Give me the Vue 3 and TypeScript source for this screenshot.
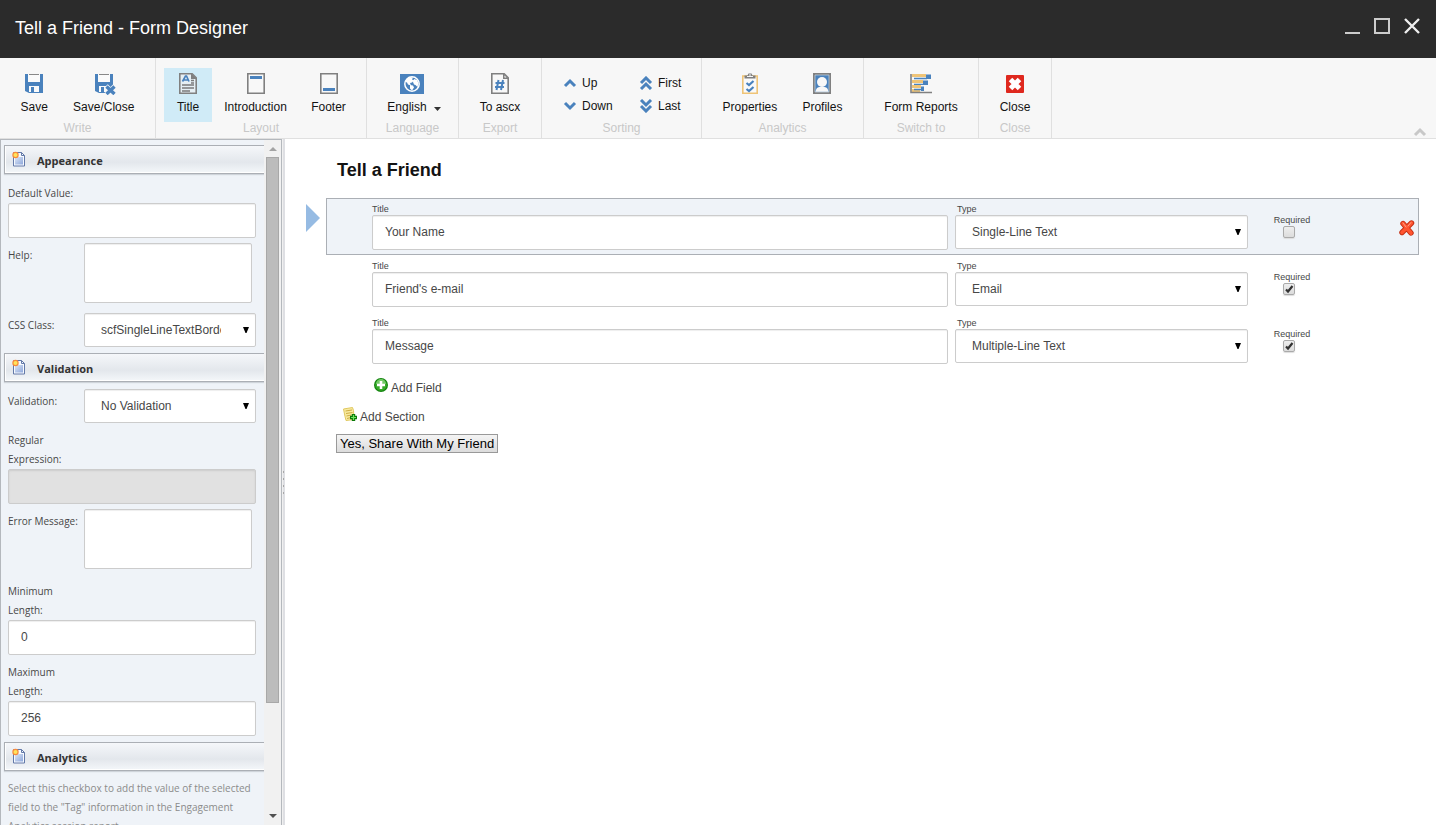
<script setup lang="ts">
import { reactive, ref } from 'vue'

interface Tool { id: string; label: string; active?: boolean; menu?: boolean }
interface Group { name: string; width: number; tools: Tool[] }
interface Field { title: string; type: string; required: boolean }

const groups: Group[] = [
  { name: 'Write', width: 156, tools: [{ id: 'save', label: 'Save' }, { id: 'saveclose', label: 'Save/Close' }] },
  { name: 'Layout', width: 211, tools: [{ id: 'title', label: 'Title', active: true }, { id: 'intro', label: 'Introduction' }, { id: 'footer', label: 'Footer' }] },
  { name: 'Language', width: 92, tools: [{ id: 'globe', label: 'English', menu: true }] },
  { name: 'Export', width: 83, tools: [{ id: 'ascx', label: 'To ascx' }] },
  { name: 'Sorting', width: 160, tools: [] },
  { name: 'Analytics', width: 162, tools: [{ id: 'properties', label: 'Properties' }, { id: 'profiles', label: 'Profiles' }] },
  { name: 'Switch to', width: 115, tools: [{ id: 'reports', label: 'Form Reports' }] },
  { name: 'Close', width: 73, tools: [{ id: 'close', label: 'Close' }] },
]
const sorting = [
  { label: 'Up', d: 'M2 10 7 5l5 5' },
  { label: 'First', d: 'M2 7l5-5 5 5M2 13l5-5 5 5' },
  { label: 'Down', d: 'M2 4l5 5 5-5' },
  { label: 'Last', d: 'M2 1l5 5 5-5M2 7l5 5 5-5' },
]
const types = ['Single-Line Text', 'Email', 'Multiple-Line Text']
const fields = reactive<Field[]>([
  { title: 'Your Name', type: 'Single-Line Text', required: false },
  { title: "Friend's e-mail", type: 'Email', required: true },
  { title: 'Message', type: 'Multiple-Line Text', required: true },
])
const selected = ref(0)
const defaultValue = ref('')
const help = ref('')
const errorMessage = ref('')
const minLength = ref('0')
const maxLength = ref('256')
</script>

<template>
  <div class="window">
    <header class="titlebar">
      <h1>Tell a Friend - Form Designer</h1>
      <div class="window-buttons">
        <button type="button" aria-label="Minimize"><svg width="16" height="18" viewBox="0 0 16 18"><path d="M1 16h15" stroke="#ccc" stroke-width="2" /></svg></button>
        <button type="button" aria-label="Maximize"><svg width="16" height="18" viewBox="0 0 16 18"><path d="M1 2h14v14H1z" fill="none" stroke="#ccc" stroke-width="2" /></svg></button>
        <button type="button" aria-label="Close window"><svg width="16" height="18" viewBox="0 0 16 18"><path d="M1 2l14 14M15 2L1 16" fill="none" stroke="#eee" stroke-width="2.4" /></svg></button>
      </div>
    </header>

    <nav class="ribbon">
      <section v-for="g in groups" :key="g.name" class="group" :style="{ minWidth: g.width + 'px' }">
        <div v-if="g.name === 'Sorting'" class="sorting">
          <button v-for="s in sorting" :key="s.label" type="button">
            <svg width="14" height="14" viewBox="0 0 14 14"><path :d="s.d" fill="none" stroke="#4a82bd" stroke-width="3" /></svg>{{ s.label }}
          </button>
        </div>
        <div v-else class="tools">
          <button v-for="t in g.tools" :key="t.id" type="button" class="tool" :class="{ active: t.active, menu: t.menu }">
            <svg width="24" height="24" viewBox="0 0 24 24">
              <g v-if="t.id === 'save' || t.id === 'saveclose'">
                <path d="M3 3h3v8h12V3h3v19H7l-4-2z" fill="#4a82bd" />
                <path d="M6 3h12v8H6z" fill="#fafafa" /><path d="M7 3.500h10" stroke="#888" />
                <path d="M7 15h10v6H7z" fill="#fafafa" /><path d="M9 16h3v5H9z" fill="#4a82bd" />
                <g v-if="t.id === 'saveclose'"><path d="M14 15l9 9M23 15l-9 9" stroke="#f7f7f7" stroke-width="5" /><path d="M14.500 15.500l8 7.500M22.500 15.500l-8 7.500" stroke="#4a82bd" stroke-width="3.400" /></g>
              </g>
              <g v-else-if="t.id === 'title'">
                <path d="M3.800 2.800h12.400l4 4v15.400H3.800z" fill="#e6eff4" stroke="#808080" stroke-width="1.600" />
                <path d="M15 2v6h6z" fill="#808080" />
                <path d="M6.500 10.500 9.500 5h1l2.500 5.500M8 9h4" fill="none" stroke="#4a82bd" stroke-width="1.700" />
                <path d="M15 9.500h3M15 12h3M6 14h12M6 17h12M6 20h8" stroke="#7b7b7b" stroke-width="1.400" />
              </g>
              <g v-else-if="t.id === 'intro' || t.id === 'footer'">
                <path d="M3.800 2.800h16.400v19.400H3.800z" fill="#f8f8f8" stroke="#808080" stroke-width="1.600" />
                <path :d="t.id === 'intro' ? 'M6 6.500h12' : 'M6 18.500h12'" stroke="#4a82bd" stroke-width="3" />
              </g>
              <g v-else-if="t.id === 'globe'">
                <path d="M0 3h24v20H0z" fill="#4a82bd" />
                <circle cx="12" cy="13" r="7.200" fill="none" stroke="#fff" stroke-width="1.500" />
                <path d="M6 9l3-3 4 .500-1 2 2 1-2 2-2 .500 1 2.500-3-1-1-2-1.500-.500zM10 14l3 .500 1 2-2 3-2-2zM14 8l3 1 1.500 3-1 4-2-2-1.500-.500-1-2.500z" fill="#fff" />
              </g>
              <g v-else-if="t.id === 'ascx'">
                <path d="M3.800 2.800h12.400l4 4v15.400H3.800z" fill="#f8f8f8" stroke="#808080" stroke-width="1.600" />
                <path d="M15 2v6h6z" fill="#808080" /><path d="M16.500 4.500v2h2z" fill="#fff" />
                <path d="M10.500 9 8.500 19M15 9l-2 10M7.500 12h9M7 16h9" stroke="#4a82bd" stroke-width="2" />
              </g>
              <g v-else-if="t.id === 'properties'">
                <path d="M4.800 5h14.400v17.200H4.800z" fill="#f9f9f9" stroke="#efc477" stroke-width="1.600" />
                <path d="M6.500 7.500v-3h3l1-2h3l1 2h3v3z" fill="#808080" /><path d="M9 5.500h6M11 4h2" stroke="#f5f5f5" />
                <path d="M8.500 12l2.500 2 4.500-4M8.500 18l2.500 2 4.500-4" fill="none" stroke="#4a82bd" stroke-width="2.200" />
              </g>
              <g v-else-if="t.id === 'profiles'">
                <path d="M3 2h18v21H3z" fill="#808080" /><path d="M5 4h14v17H5z" fill="#4a82bd" stroke="#bccbd8" stroke-width=".8" />
                <path d="M5.500 20.800q.5-4.800 5-5h3q4.500.2 5 5z" fill="#f8f8f8" /><circle cx="12" cy="11" r="5" fill="#f8f8f8" />
              </g>
              <g v-else-if="t.id === 'reports'">
                <path d="M3 4.500h14M3 10.500h11M3 15.500h9M3 19.500h8" stroke="#efc477" stroke-width="3" />
                <path d="M17 3.500h5v4.500h-5zM14 9.500h5v4.500h-5zM12 15.500h3v4.500h-3z" fill="#4a82bd" />
                <path d="M5 7.500h13M5 13.400h10M5 18.500h8" stroke="#4a82bd" stroke-width="1.400" />
                <path d="M2 3v18.500h21" fill="none" stroke="#808080" stroke-width="1.600" />
              </g>
              <g v-else>
                <rect x="3" y="4" width="18" height="18" rx="1" fill="#df281e" />
                <path d="M7.500 8.500l9 9M16.500 8.500l-9 9" stroke="#fff" stroke-width="5" />
              </g>
            </svg>
            <span>{{ t.label }}<svg v-if="t.menu" class="caret" width="7" height="4" viewBox="0 0 7 4"><path d="M0 0h7L3.500 4z" fill="#333" /></svg></span>
          </button>
        </div>
        <h2>{{ g.name }}</h2>
      </section>
      <button type="button" class="collapse" aria-label="Collapse ribbon"><svg width="14" height="10" viewBox="0 0 14 10"><path d="M2 8l5-5 5 5" fill="none" stroke="#c8c8c8" stroke-width="3" /></svg></button>
    </nav>

    <div class="body">
      <aside class="sidebar">
        <form class="panel" @submit.prevent>
          <h3><svg width="14" height="16" viewBox="0 0 14 16"><use href="#sheet" /></svg>Appearance</h3>
          <div class="stack first"><label for="dv">Default Value:</label><input id="dv" v-model="defaultValue" type="text"></div>
          <div class="side tall"><label for="help">Help:</label><textarea id="help" v-model="help"></textarea></div>
          <div class="side css"><label for="css">CSS Class:</label><div class="select"><select id="css"><option>scfSingleLineTextBorder</option></select><svg width="6" height="6" viewBox="0 0 6 6"><use href="#down" /></svg></div></div>
          <h3><svg width="14" height="16" viewBox="0 0 14 16"><use href="#sheet" /></svg>Validation</h3>
          <div class="side valid"><label for="val">Validation:</label><div class="select"><select id="val"><option>No Validation</option></select><svg width="6" height="6" viewBox="0 0 6 6"><use href="#down" /></svg></div></div>
          <div class="stack"><label for="re">Regular<br>Expression:</label><input id="re" type="text" disabled></div>
          <div class="side tall error"><label for="em">Error Message:</label><textarea id="em" v-model="errorMessage"></textarea></div>
          <div class="stack"><label for="min">Minimum<br>Length:</label><input id="min" v-model="minLength" type="text"></div>
          <div class="stack"><label for="max">Maximum<br>Length:</label><input id="max" v-model="maxLength" type="text"></div>
          <h3 class="last"><svg width="14" height="16" viewBox="0 0 14 16"><use href="#sheet" /></svg>Analytics</h3>
          <p>Select this checkbox to add the value of the selected field to the "Tag" information in the Engagement Analytics session report.</p>
        </form>
        <div class="scrollbar">
          <svg width="16" height="17" viewBox="0 0 16 17"><path d="M4 11l4-4 4 4z" fill="#a3a3a3" /></svg>
          <div class="track"><div class="thumb"></div></div>
          <svg width="16" height="18" viewBox="0 0 16 18"><path d="M4 7h8l-4 4z" fill="#505050" /></svg>
        </div>
      </aside>
      <div class="splitter"><i></i><i></i><i></i><i></i></div>

      <main>
        <h2>Tell a Friend</h2>
        <div v-for="(f, i) in fields" :key="i" class="line" @click="selected = i">
          <svg width="15" height="28" viewBox="0 0 15 28"><path v-if="selected === i" d="M0 0l14 14L0 28z" fill="#96bbe3" /></svg>
          <div class="row" :class="{ chosen: selected === i }">
            <div class="cell"><label :for="'t' + i">Title</label><input :id="'t' + i" v-model="f.title" type="text"></div>
            <div class="cell type"><label :for="'y' + i">Type</label><div class="select"><select :id="'y' + i" v-model="f.type"><option v-for="t in types" :key="t">{{ t }}</option></select><svg width="6" height="6" viewBox="0 0 6 6"><use href="#down" /></svg></div></div>
            <div class="required"><label :for="'r' + i">Required</label><input :id="'r' + i" v-model="f.required" type="checkbox"></div>
            <button v-if="selected === i" type="button" class="delete" aria-label="Delete field">
              <svg width="16" height="16" viewBox="0 0 16 16"><path d="M4 3.500 12 13M12.500 3 3 12.500" stroke="#c22e12" stroke-width="5.400" stroke-linecap="round" /><path d="M4 3.500 12 13M12.500 3 3 12.500" stroke="#ff5430" stroke-width="3.600" stroke-linecap="round" /><path d="M4 3l3 4M12 2.500 9 6" stroke="#ffa187" stroke-linecap="round" /></svg>
            </button>
          </div>
        </div>
        <button type="button" class="add field"><svg width="14" height="14" viewBox="0 0 14 14"><circle cx="7" cy="7" r="7" fill="#14850f" /><circle cx="7" cy="7" r="5.800" fill="#36aa28" /><path d="M2 6a5 5 0 0110 0z" fill="#72c966" /><path d="M7 3v8M3 7h8" stroke="#fff" stroke-width="2.600" /></svg>Add Field</button>
        <button type="button" class="add section"><svg width="14" height="14" viewBox="0 0 14 14"><path d="M.5 2 9.500.5l1 3 .5 9-8 1-1-4z" fill="#f8eaa0" stroke="#e0c860" /><path d="M2.500 4l6.500-1M3 6.500l6.500-1M3.500 9l5-1M4 11.500l4-1" stroke="#cfae42" /><path d="M10.500 7v7M7 10.500h7" stroke="#087908" stroke-width="3.400" /><path d="M10.500 8v5M8 10.500h5" stroke="#72e45d" stroke-width="1.200" /></svg>Add Section</button>
        <button type="button" class="submit">Yes, Share With My Friend</button>
      </main>
    </div>

    <svg class="defs" width="0" height="0" aria-hidden="true">
      <defs>
        <linearGradient id="paper" x2="1" y2="1"><stop stop-color="#dde6f5" /><stop offset="1" stop-color="#8ea8dc" /></linearGradient>
        <symbol id="sheet" viewBox="0 0 14 16"><path d="M1.500 1.500h8l3 3v10.500h-11z" fill="#f7faff" stroke="#6279a8" /><path d="M3 6h8v7.500H3z" fill="url(#paper)" /><path d="M9.500 1.500v3h3" fill="none" stroke="#6279a8" /><circle cx="3.500" cy="4" r="3.200" fill="#f88a3c" /><circle cx="3.500" cy="4" r="2" fill="#ffe45c" /></symbol>
        <symbol id="down" viewBox="0 0 6 6"><path d="M0 0h6L3.500 6h-1z" fill="#000" /></symbol>
      </defs>
    </svg>
  </div>
</template>

<style>
html, body { margin: 0; }
</style>

<style scoped>
* { box-sizing: border-box; }
.window { height: 100vh; display: flex; flex-direction: column; overflow: hidden; background: #fff; font: 12px/16px "Liberation Sans", Arial, sans-serif; color: #474747; }
h1, h2, h3, p { margin: 0; }
button, input, select, textarea { font: inherit; color: inherit; margin: 0; }
button { padding: 0; border: 0; background: none; }
svg { display: block; flex: none; }
.defs { position: absolute; }
.titlebar { flex: none; height: 58px; padding: 0 16px 2px 15px; display: flex; align-items: center; justify-content: space-between; background: #2b2b2b; }
.titlebar h1 { font-size: 18px; font-weight: 400; line-height: 24px; color: #fff; }
.window-buttons { display: flex; gap: 14px; padding-bottom: 4px; }

.ribbon { flex: none; height: 81px; display: flex; background: #f7f7f7; border-bottom: 1px solid #e0e0e0; color: #131313; }
.group { padding: 10px 8px 0; border-right: 1px solid #e0e0e0; }
.tools { display: flex; }
.tool { flex: 1 0 auto; height: 54px; padding: 3px 11px 0; display: flex; flex-direction: column; align-items: center; gap: 4px; white-space: nowrap; }
.tool.active { flex-grow: 0; padding: 3px 12px 0; background: #d0ebf7; }
.tool.menu { padding: 3px 8px 0 11px; }
.tool.menu > svg { margin-right: 4px; }
.tool span { display: flex; align-items: center; line-height: 16px; }
.caret { margin: 3px 0 0 7px; }
.group h2 { font-size: 12px; font-weight: 400; line-height: 16px; margin-top: -2px; text-align: center; color: #c8c8c8; }
.sorting { height: 54px; padding: 3px 11px 5px 13px; display: grid; grid-template-columns: 51px auto; column-gap: 25px; }
.sorting button { display: flex; align-items: center; gap: 5px; }
.collapse { margin-left: auto; align-self: flex-end; padding: 0 9px 1px 0; }

.body { flex: 1; min-height: 0; display: flex; }
.sidebar { flex: none; width: 282px; display: flex; border: solid #b4b8bd; border-width: 1px 1px 0; background: #eff3f8; overflow: hidden; font-family: "Open Sans", "Noto Sans", sans-serif; font-size: 10px; line-height: 19px; }
.panel { flex: 1; min-width: 0; padding: 5px 0 0 3px; overflow: hidden; }
.panel h3 { height: 29px; display: flex; align-items: center; gap: 11px; padding: 2px 0 0 7px; border: solid #abafb5; border-width: 1px 0 1px 1px; background: linear-gradient(#f5f7fa, #e3e7ec 60%, #f4f7fa); box-shadow: inset 1px -1px #fff, 0 1px 1px #cfd4da; font-size: 11px; line-height: 18px; color: #333; }
.panel h3 svg { margin-bottom: 4px; }
.stack, .side { padding: 8px 8px 0 4px; }
.stack.first { padding-top: 10px; }
.stack label { display: block; }
.side { display: grid; grid-template-columns: 76px minmax(0, 1fr); white-space: nowrap; }
.side label { padding-top: 3px; }
.side.tall { padding: 5px 12px 10px 4px; }
.side.css { padding-top: 0; padding-bottom: 6px; }
.side.valid { padding-top: 7px; }
.side.error { padding-bottom: 5px; }
.last { margin-top: 6px; }
.panel p { padding: 8px 0 0 4px; color: #8b8b8b; }
input[type="text"], select, textarea { display: block; width: 100%; border: 1px solid #ccc; border-radius: 2px; background: #fff; font-family: "Liberation Sans", Arial, sans-serif; font-size: 12px; line-height: 16px; color: #474747; outline: 0; box-shadow: inset 0 1px 1px #eee; }
input[type="text"] { height: 35px; padding: 0 12px 2px; }
input[type="text"]:disabled { background: #e1e1e1; box-shadow: inset 0 1px 2px #ccc; }
textarea { height: 60px; resize: none; }
.select { position: relative; }
select { appearance: none; height: 34px; padding: 0 34px 1px 16px; }
.select svg { position: absolute; right: 7px; top: 14px; pointer-events: none; }
.scrollbar { flex: none; width: 17px; display: flex; flex-direction: column; background: #f1f1f1; align-items: center; }
.track { flex: 1; width: 13px; }
.thumb { height: 84%; background: #bcbcbc; border: 1px solid #a8a8a8; }
.splitter { flex: none; width: 3px; padding-right: 1px; display: flex; flex-direction: column; align-items: flex-end; justify-content: center; gap: 5px; background: #dedfe3; border-left: 1px solid #f0f0f0; }
.splitter i { width: 1px; height: 2px; background: #a8a8a8; }

main { flex: 1; min-width: 0; padding: 19px 17px 0 21px; display: flex; flex-direction: column; align-items: flex-start; }
main h2 { margin: 0 0 16px 31px; font-size: 18px; line-height: 24px; color: #131313; }
.line { align-self: stretch; display: flex; align-items: flex-start; gap: 5px; }
.line > svg { margin-top: 6px; }
.row { flex: 1; min-width: 0; height: 57px; padding: 5px 3px 4px 45px; border: 1px solid transparent; display: grid; grid-template-columns: minmax(0, 1fr) 293px 62px 105px; }
.row.chosen { background: #eff3f8; border-color: #abafb5; }
.cell { display: flex; flex-direction: column; }
.cell label, .required label { font-size: 9px; line-height: 11px; }
.type label { padding-left: 2px; }
.cell:first-child { margin-right: 7px; }
.required { padding: 11px 0 0 26px; display: flex; flex-direction: column; align-items: center; }
.required input { appearance: none; width: 12px; height: 12px; margin: 0 6px 0 0; border: 1px solid #aaa; border-radius: 2px; background: linear-gradient(#eee, #dcdcdc); box-shadow: 0 1px 1px #ddd; }
.required input:checked { background: url("data:image/svg+xml,%3Csvg xmlns='http://www.w3.org/2000/svg' viewBox='0 0 10 10'%3E%3Cpath d='M2 5.500l2 2L8.500 2' fill='none' stroke='%23333' stroke-width='2.200'/%3E%3C/svg%3E"), linear-gradient(#eee, #dcdcdc); }
.delete { justify-self: end; align-self: center; padding-top: 2px; }
.add { display: flex; align-items: center; line-height: 16px; gap: 3px; }
.add svg { margin-bottom: 5px; }
.add.field { margin: 9px 0 0 68px; }
.add.section { margin: 10px 0 0 37px; }
.submit { margin: 8px 0 0 30px; height: 19px; padding: 0 3px; border: 1px solid #999; background: linear-gradient(#f4f4f4, #dcdcdc); font-size: 13px; line-height: 16px; color: #000; white-space: nowrap; }
</style>
